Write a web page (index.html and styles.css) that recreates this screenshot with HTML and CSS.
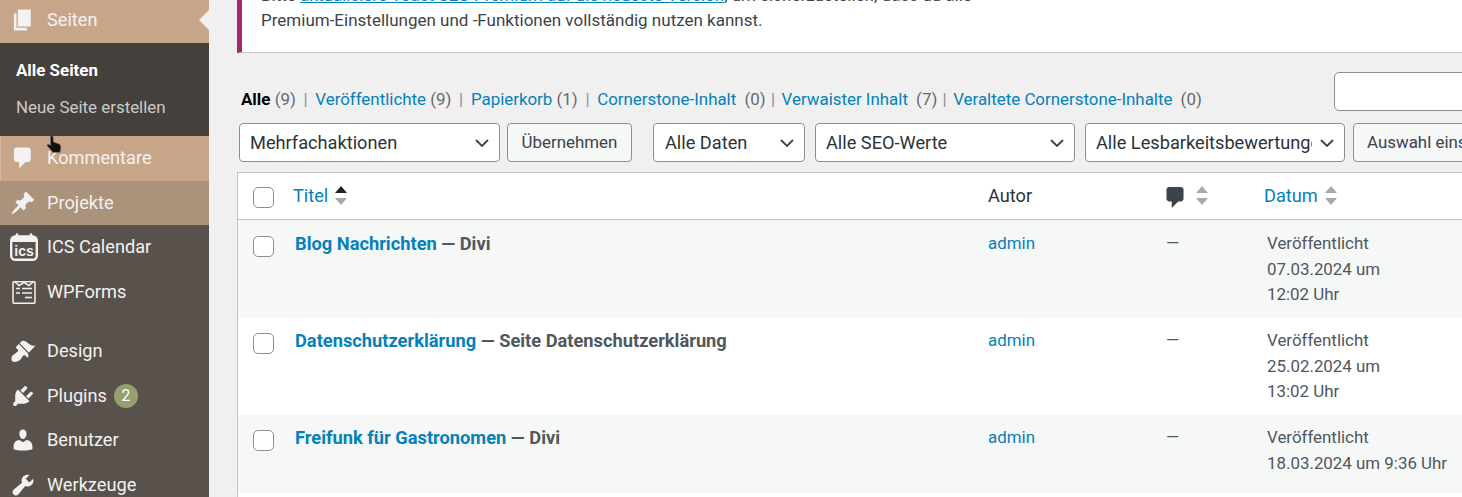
FILE: index.html
```html
<!DOCTYPE html>
<html lang="de">
<head>
<meta charset="utf-8">
<title>Seiten</title>
<link rel="stylesheet" href="styles.css">
</head>
<body>
<div class="shell">
<nav class="side">
  <div class="item current">
    <svg class="ic" viewBox="0 0 20 20"><path d="M6 15V2h10v13H6zm-1 1h8v2H3V5h2v11z"/></svg>
    <span>Seiten</span><i class="notch"></i>
  </div>
  <div class="submenu">
    <div class="sub on">Alle Seiten</div>
    <div class="sub">Neue Seite erstellen</div>
  </div>
  <div class="item hl1">
    <svg class="ic" viewBox="0 0 20 20"><path d="M5 2h9c1.1 0 2 .9 2 2v7c0 1.1-.9 2-2 2h-2l-5 5v-5H5c-1.1 0-2-.9-2-2V4c0-1.1.9-2 2-2z"/></svg>
    <span>Kommentare</span>
    <svg class="cursor" viewBox="0 0 16 17"><path d="M4.500 0h2.500l.5 6 6 2 1.500 3-1 5.500H7L1 9.500l1-1.500 2.500 1.500z" fill="#111" stroke="#8d8075" stroke-width=".5"/></svg>
  </div>
  <div class="item hl2">
    <svg class="ic" viewBox="0 0 20 20"><path d="M10.440 3.020l1.820-1.820 6.360 6.350-1.830 1.820c-1.050-.68-2.480-.57-3.410.36l-.75.75c-.92.93-1.040 2.350-.35 3.410l-1.830 1.820-2.410-2.410-2.800 2.790c-.42.42-3.380 2.710-3.800 2.290s1.860-3.390 2.280-3.810l2.790-2.790L4.100 9.360l1.830-1.820c1.050.69 2.480.57 3.400-.36l.75-.75c.93-.92 1.050-2.350.36-3.410z"/></svg>
    <span>Projekte</span>
  </div>
  <div class="item">
    <svg class="ic big" viewBox="0 0 28 28"><rect x="1.200" y="3.500" width="25.600" height="23.300" rx="4" class="frame"/><path d="M2 9V6a3 3 0 0 1 3-3h18a3 3 0 0 1 3 3v3z"/><path d="M7 1.500v3M21 1.500v3" class="ring"/><text x="14" y="23" class="ics">ics</text></svg>
    <span>ICS Calendar</span>
  </div>
  <div class="item forms">
    <svg class="ic wide" viewBox="0 0 24 24"><rect x="1" y="1.800" width="22" height="21.400" rx="1" class="thin"/><path d="M3 2l4 3.500 5-3 5 3 4-3.500M4 8.500h4M10 8.500h10M4 13h4M10 13h10M13 17.500h7" class="thin"/></svg>
    <span>WPForms</span>
  </div>
  <div class="item gap">
    <svg class="ic" viewBox="0 0 20 20"><path d="M14.480 11.060L7.410 3.990l1.500-1.500c.5-.56 2.300-.47 3.510.32 1.210.8 1.430 1.280 2.910 2.100 1.180.64 2.450 1.260 4.450.85zm-.71.71L6.700 4.700 4.930 6.470c-.39.39-.39 1.020 0 1.410l1.060 1.060c.39.39.39 1.030 0 1.420-.6.6-1.430 1.110-2.210 1.690-.35.26-.7.53-1.010.84C1.430 13.230.78 15.780 1.400 17.300c.16.4.5.7.96.86 1.540.6 4.090-.04 5.440-1.390.31-.31.58-.66.84-1.010.58-.78 1.090-1.610 1.690-2.210.39-.39 1.030-.39 1.420 0l1.060 1.060c.39.39 1.020.39 1.410 0z"/></svg>
    <span>Design</span>
  </div>
  <div class="item">
    <svg class="ic" viewBox="0 0 20 20"><path d="M13.110 4.360L9.870 7.600 8 5.730l3.240-3.240c.35-.34 1.050-.2 1.560.32.52.51.66 1.210.31 1.550zm-8 1.770l.91-1.120 9.010 9.010-1.190.84c-.71.71-2.630 1.160-3.820 1.160H6.140L4.900 17.260c-.59.59-1.540.59-2.120 0-.59-.58-.59-1.530 0-2.120l1.240-1.240v-3.880c0-1.130.4-3.190 1.090-3.890zm7.260 3.970l3.240-3.240c.34-.35 1.040-.21 1.550.31.52.51.66 1.210.31 1.550l-3.240 3.250z"/></svg>
    <span>Plugins</span><b class="badge">2</b>
  </div>
  <div class="item">
    <svg class="ic" viewBox="0 0 20 20"><path d="M10 9.250c-2.270 0-2.730-3.440-2.730-3.440C7 4.020 7.820 2 9.970 2c2.160 0 2.980 2.020 2.710 3.810 0 0-.41 3.440-2.680 3.440zm0 2.570L12.720 10c2.390 0 4.520 2.330 4.520 4.530v2.490s-3.650 1.130-7.240 1.130c-3.650 0-7.240-1.130-7.240-1.130v-2.490c0-2.250 1.940-4.480 4.470-4.480z"/></svg>
    <span>Benutzer</span>
  </div>
  <div class="item">
    <svg class="ic" viewBox="0 0 20 20"><path d="M16.680 9.770c-1.340 1.340-3.300 1.670-4.950.99l-5.410 6.520c-.99.99-2.590.99-3.580 0s-.99-2.590 0-3.570l6.520-5.420c-.68-1.650-.35-3.610.99-4.950 1.280-1.280 3.120-1.620 4.720-1.060l-2.890 2.890 2.820 2.820 2.890-2.890c.56 1.600.22 3.440-1.060 4.720z"/></svg>
    <span>Werkzeuge</span>
  </div>
</nav>
<main class="content">
  <div class="notice">
    <p>Bitte <a class="u" href="#">aktualisiere Yoast SEO Premium auf die neueste Version</a>, um sicherzustellen, dass du alle</p>
    <p>Premium-Einstellungen und -Funktionen vollständig nutzen kannst.</p>
  </div>
  <div class="status-row">
    <ul class="views">
      <li><strong>Alle</strong> <em>(9)</em></li><li class="sep">|</li>
      <li><a href="#">Veröffentlichte</a> <em>(9)</em></li><li class="sep">|</li>
      <li><a href="#">Papierkorb</a> <em>(1)</em></li><li class="sep">|</li>
      <li><a href="#">Cornerstone-Inhalt</a> <em class="wide-g">(0)</em></li><li class="sep tight">|</li>
      <li><a href="#">Verwaister Inhalt</a> <em class="wide-g">(7)</em></li><li class="sep tight">|</li>
      <li><a href="#">Veraltete Cornerstone-Inhalte</a> <em class="wide-g">(0)</em></li>
    </ul>
    <div class="search"></div>
  </div>
  <div class="filters">
    <div class="select w261"><span>Mehrfachaktionen</span><svg class="chev" viewBox="0 0 14 8"><path d="M1 1l6 6 6-6"/></svg></div>
    <div class="btn">Übernehmen</div>
    <div class="select w152 ml"><span>Alle Daten</span><svg class="chev" viewBox="0 0 14 8"><path d="M1 1l6 6 6-6"/></svg></div>
    <div class="select w260"><span>Alle SEO-Werte</span><svg class="chev" viewBox="0 0 14 8"><path d="M1 1l6 6 6-6"/></svg></div>
    <div class="select w260"><span>Alle Lesbarkeitsbewertungen</span><svg class="chev" viewBox="0 0 14 8"><path d="M1 1l6 6 6-6"/></svg></div>
    <div class="btn last">Auswahl einschränken</div>
  </div>
  <div class="table">
    <div class="row head">
      <div class="c-check"><i class="box"></i></div>
      <div class="c-title"><a href="#">Titel</a><span class="sort"><i class="up dark"></i><i class="down"></i></span></div>
      <div class="c-author">Autor</div>
      <div class="c-comm"><svg class="bubble" viewBox="3 2 13 16"><path d="M5 2h9c1.100 0 2 .9 2 2v7c0 1.100-.9 2-2 2h-2l-5 5v-5H5c-1.100 0-2-.9-2-2V4c0-1.100.9-2 2-2z"/></svg><span class="sort"><i class="up"></i><i class="down"></i></span></div>
      <div class="c-date"><a href="#">Datum</a><span class="sort"><i class="up"></i><i class="down"></i></span></div>
    </div>
    <div class="row alt r1">
      <div class="c-check"><i class="box"></i></div>
      <div class="c-title"><a href="#">Blog Nachrichten</a> — Divi</div>
      <div class="c-author"><a href="#">admin</a></div>
      <div class="c-comm">—</div>
      <div class="c-date">Veröffentlicht<br>07.03.2024 um<br>12:02 Uhr</div>
    </div>
    <div class="row r2">
      <div class="c-check"><i class="box"></i></div>
      <div class="c-title"><a href="#">Datenschutzerklärung</a> — Seite Datenschutzerklärung</div>
      <div class="c-author"><a href="#">admin</a></div>
      <div class="c-comm">—</div>
      <div class="c-date">Veröffentlicht<br>25.02.2024 um<br>13:02 Uhr</div>
    </div>
    <div class="row alt r3">
      <div class="c-check"><i class="box"></i></div>
      <div class="c-title"><a href="#">Freifunk für Gastronomen</a> — Divi</div>
      <div class="c-author"><a href="#">admin</a></div>
      <div class="c-comm">—</div>
      <div class="c-date">Veröffentlicht<br>18.03.2024 um 9:36 Uhr</div>
    </div>
    <div class="row r4"></div>
  </div>
</main>
</div>
</body>
</html>
```
FILE: styles.css
```css
* { box-sizing: border-box; }
html, body { margin: 0; height: 497px; overflow: hidden; }
body { font-family: Roboto, "Liberation Sans", sans-serif; font-size: 16.9px; color: #3c434a; background: #f0f0f1; }
a { color: #0581b9; text-decoration: none; }
.shell { display: flex; width: 1462px; height: 497px; overflow: hidden; }

.side { width: 209px; flex: none; background: #59524c; color: #f3f1f1; height: 499px; overflow: hidden; margin-top: -1.76px; font-size: 18.2px; }
.item { position: relative; display: flex; align-items: center; height: 44.46px; padding-left: 10.4px; }
.item span { line-height: 24px; }
.ic { flex: none; width: 26px; height: 26px; margin-right: 10.6px; fill: currentColor; color: #f3f1f1; }
.ic.big { width: 28px; height: 28px; margin: 0 9px 0 -.4px; }
.ic.wide { width: 24px; height: 24px; margin: 0 11px 0 1.6px; }
.frame { fill: none; stroke: currentColor; stroke-width: 2.4; }
.ring { fill: none; stroke: currentColor; stroke-width: 2.6; stroke-linecap: round; }
.thin { fill: none; stroke: currentColor; stroke-width: 1.5; }
.ics { font: 700 14px "Liberation Sans", sans-serif; text-anchor: middle; fill: currentColor; }
.current { background: #c7a589; }
.notch { position: absolute; right: 0; top: 11.76px; border: 10px solid transparent; border-right-color: #f0f0f1; border-left: 0; }
.submenu { background: #46403c; height: 93px; padding-top: 12px; font-size: 16.9px; }
.sub { height: 37px; line-height: 30px; padding-left: 16px; color: #cbcac8; }
.sub.on { color: #fff; font-weight: 700; }
.hl1 { background: #c7a589; border-left: 1px solid #d3baa4; padding-left: 9.4px; height: 45px; }
.hl2 { background: #ab927a; height: 44px; }
.forms { height: 45.4px; padding-top: 1px; }
.gap { margin-top: 14.6px; }
.cursor { position: absolute; left: 45px; top: 0; width: 16px; height: 17px; }
.badge { margin-left: 7px; width: 24px; height: 24px; border-radius: 50%; background: #96a06f; color: #fff; font-weight: 400; font-size: 15.6px; line-height: 24px; text-align: center; }

.content { flex: 1; min-width: 0; padding-left: 28px; }
.notice { height: 53px; background: #fff; border-left: 5px solid #a4286a; border-bottom: 1px solid #c3c4c7; padding-left: 19px; line-height: 25.35px; font-size: 17px; overflow: hidden; }
.notice p { margin: 0; position: relative; top: -17px; color: #3c434a; white-space: nowrap; }
.u { text-decoration: underline; }
.status-row { display: flex; justify-content: space-between; height: 67px; }
.views { list-style: none; margin: 36px 0 0 4px; padding: 0; display: flex; height: 20px; line-height: 20px; color: #646970; white-space: nowrap; }
.views em { font-style: normal; }
.views strong { color: #000; font-weight: 700; }
.sep { margin: 0 7.7px; color: #8c8f94; }
.sep.tight { margin: 0 6.5px 0 5.3px; }
.wide-g { margin-left: 4px; }
.search { width: 200px; height: 39px; margin-top: 19px; margin-right: -72px; background: #fff; border: 1px solid #8c8f94; border-radius: 5px; flex: none; }
.filters { display: flex; align-items: stretch; height: 39px; margin: 3px 0 0 2px; width: 1300px; gap: 7px; }
.select { display: flex; align-items: center; background: #fff; border: 1px solid #8c8f94; border-radius: 4px; padding: 0 10px; font-size: 18.2px; color: #2c3338; flex: none; height: 39px; }
.select span { flex: 1; overflow: hidden; white-space: nowrap; }
.chev { width: 14px; height: 8px; flex: none; margin-left: 8px; fill: none; stroke: #3c434a; stroke-width: 1.8; }
.w261 { width: 261px; }
.w152 { width: 152px; }
.w260 { width: 260px; margin-left: 3px; }
.select.ml { margin-left: 14px; padding-left: 11px; }
.btn { width: 125px; height: 39px; flex: none; border: 1px solid #8c8f94; border-radius: 4px; background: #f6f7f7; color: #3c434a; font-size: 16.9px; line-height: 37px; text-align: center; white-space: nowrap; overflow: hidden; }
.btn.last { width: 200px; margin-left: 1px; padding-left: 13px; text-align: left; }
.table { margin-top: 10px; background: #fff; border: 1px solid #c3c4c7; border-right: 0; }
.row { display: flex; }
.head { height: 47px; padding-bottom: 1px; border-bottom: 1px solid #c3c4c7; align-items: center; font-size: 18.2px; color: #2c3338; }
.alt { background: #f6f7f7; }
.r1 { height: 98px; padding-top: 1px; }
.r2 { height: 97px; }
.r3 { height: 77.5px; }
.r4 { height: 30px; background: #fff; }
.c-check { width: 55px; flex: none; }
.box { display: block; width: 21px; height: 21px; margin-left: 15px; background: #fff; border: 1px solid #8c8f94; border-radius: 5px; }
.head .box { margin-top: 4px; }
.c-title { width: 695px; flex: none; }
.c-author { width: 178px; flex: none; }
.c-comm { width: 98px; flex: none; }
.c-date { flex: 1; }
.head .c-title, .head .c-comm, .head .c-date { display: flex; align-items: center; }
.row:not(.head) > div { padding-top: 10px; line-height: 25.5px; }
.row:not(.head) .c-check { padding-top: 15px; }
.row:not(.head) .c-title { font-size: 18.28px; font-weight: 700; color: #50575e; padding-left: 2px; padding-top: 9.5px; line-height: 25px; }
.row:not(.head) .c-date { padding-left: 3px; color: #50575e; white-space: nowrap; }
.row:not(.head) .c-comm { color: #50575e; }
.sort { display: inline-flex; flex-direction: column; gap: 4.5px; margin-left: 7px; }
.up, .down { display: block; width: 0; height: 0; border-left: 6px solid transparent; border-right: 6px solid transparent; }
.up { border-bottom: 7.5px solid #a7aaad; }
.down { border-top: 7.5px solid #a7aaad; }
.up.dark { border-bottom-color: #1d2327; }
.bubble { width: 18px; height: 21px; fill: #3c434a; margin-top: 3px; }
.c-comm .sort { margin-left: 12px; }
```
